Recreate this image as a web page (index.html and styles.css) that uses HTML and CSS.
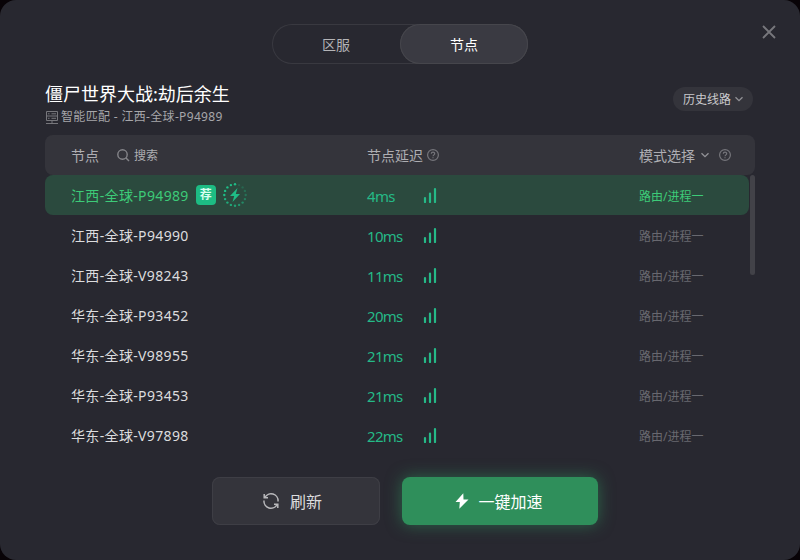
FILE: index.html
```html
<!DOCTYPE html>
<html lang="zh-CN">
<head>
  <meta charset="UTF-8" />
  <meta name="viewport" content="width=device-width, initial-scale=1.0" />
  <title>节点选择</title>
  <link rel="stylesheet" href="styles.css">
</head>
<body>
  <!-- shared icons -->
  <svg class="sprite" width="0" height="0">
    <symbol id="chevron" viewBox="0 0 10 10"><path d="M1.500 3.200 5 6.700 8.500 3.200" /></symbol>
    <symbol id="help" viewBox="0 0 12 12"><circle cx="6" cy="6" r="5.400" /><path d="M4.300 4.800c0-2.300 3.400-2.200 3.400-.1C7.700 5.900 6 5.900 6 7.300M6 8.200v1" /></symbol>
    <symbol id="signal" viewBox="0 0 14 16"><path d="M2 11v4M7 6.500v8.500M12 2v13" /></symbol>
  </svg>

  <div class="window">
    <button class="close" aria-label="关闭">
      <svg width="14" height="14" viewBox="0 0 14 14"><path d="M1 1 13 13M13 1 1 13" /></svg>
    </button>

    <div class="tabs">
      <div class="tab">区服</div>
      <div class="tab active">节点</div>
    </div>

    <div class="heading">
      <div>
        <h1>僵尸世界大战:劫后余生</h1>
        <p class="subtitle">
          <svg class="server" width="12" height="13" viewBox="0 0 12 13"><path d="M.5.5h11v9h-11zM.5 5h11M2 2.800h1.500M5.500 2.800h4.500M2 7.300h1.500M5.500 7.300h4.500M6 9.500v3M0 12.500h12" /></svg>
          <span>智能匹配 - 江西-全球-P94989</span>
        </p>
      </div>
      <button class="history">历史线路<svg class="chevron"><use href="#chevron" /></svg></button>
    </div>

    <div class="table-head">
      <div class="col-name">
        <span>节点</span>
        <svg class="search" width="13" height="13" viewBox="0 0 13 13"><circle cx="5.500" cy="5.500" r="4.700" /><path d="M9 9 12 12" /></svg>
        <span class="search-text">搜索</span>
      </div>
      <div class="col-delay">节点延迟<svg class="help"><use href="#help" /></svg></div>
      <div class="col-mode">模式选择<svg class="chevron"><use href="#chevron" /></svg><svg class="help"><use href="#help" /></svg></div>
    </div>

    <div class="list">
      <div class="rows">
        <div class="row selected">
          <div class="col-name">
            <span>江西-全球-P94989</span>
            <span class="badge">荐</span>
            <svg class="boost" width="24" height="24" viewBox="0 0 24 24">
              <g fill="#1fbd86">
                <circle cx="12" cy="1.300" r="1.200" />
                <circle cx="7.900" cy="2.100" r="1.200" />
                <circle cx="4.400" cy="4.400" r="1.200" />
                <circle cx="2.100" cy="7.900" r="1.200" />
                <circle cx="1.300" cy="12" r="1.200" />
                <circle cx="2.100" cy="16.100" r="1.200" opacity=".9" />
                <circle cx="4.400" cy="19.600" r="1.200" opacity=".85" />
                <circle cx="7.900" cy="21.900" r="1.200" opacity=".8" />
                <circle cx="12" cy="22.700" r="1.200" opacity=".75" />
                <circle cx="16.100" cy="21.900" r="1.200" opacity=".65" />
                <circle cx="19.600" cy="19.600" r="1.200" opacity=".55" />
                <circle cx="21.900" cy="16.100" r="1.200" opacity=".45" />
                <circle cx="22.700" cy="12" r="1.200" opacity=".35" />
                <circle cx="21.900" cy="7.900" r="1.200" opacity=".3" />
                <circle cx="19.600" cy="4.400" r="1.200" opacity=".25" />
                <circle cx="16.100" cy="2.100" r="1.200" opacity=".2" />
                <path d="M14.500 5 7 13h4.200L9.500 19 17 11h-4.200z" />
              </g>
            </svg>
          </div>
          <div class="col-delay"><span class="ms">4ms</span><svg class="signal"><use href="#signal" /></svg></div>
          <div class="col-mode">路由/进程一</div>
        </div>
        <div class="row">
          <div class="col-name">江西-全球-P94990</div>
          <div class="col-delay"><span class="ms">10ms</span><svg class="signal"><use href="#signal" /></svg></div>
          <div class="col-mode">路由/进程一</div>
        </div>
        <div class="row">
          <div class="col-name">江西-全球-V98243</div>
          <div class="col-delay"><span class="ms">11ms</span><svg class="signal"><use href="#signal" /></svg></div>
          <div class="col-mode">路由/进程一</div>
        </div>
        <div class="row">
          <div class="col-name">华东-全球-P93452</div>
          <div class="col-delay"><span class="ms">20ms</span><svg class="signal"><use href="#signal" /></svg></div>
          <div class="col-mode">路由/进程一</div>
        </div>
        <div class="row">
          <div class="col-name">华东-全球-V98955</div>
          <div class="col-delay"><span class="ms">21ms</span><svg class="signal"><use href="#signal" /></svg></div>
          <div class="col-mode">路由/进程一</div>
        </div>
        <div class="row">
          <div class="col-name">华东-全球-P93453</div>
          <div class="col-delay"><span class="ms">21ms</span><svg class="signal"><use href="#signal" /></svg></div>
          <div class="col-mode">路由/进程一</div>
        </div>
        <div class="row">
          <div class="col-name">华东-全球-V97898</div>
          <div class="col-delay"><span class="ms">22ms</span><svg class="signal"><use href="#signal" /></svg></div>
          <div class="col-mode">路由/进程一</div>
        </div>
      </div>
      <div class="scrollbar"></div>
    </div>

    <div class="actions">
      <button class="btn refresh">
        <svg width="16" height="16" viewBox="0 0 16 16"><path d="M1.200 1v3.800H5M1.800 4.600A7 7 0 0 1 15 8.500M14.800 15v-3.800H11M14.200 11.400A7 7 0 0 1 1 7.500" /></svg>
        <span>刷新</span>
      </button>
      <button class="btn start">
        <svg width="14" height="16" viewBox="0 0 14 16"><path d="M8.300.3.500 9h4.300L4.300 15.700 13.500 6.500H8.500z" /></svg>
        <span>一键加速</span>
      </button>
    </div>
  </div>
</body>
</html>
```

FILE: styles.css
```css
:root {
  --window-bg: #282830;
  --panel-bg: #34343b;
  --border: #3e3e45;
  --text: #dcdcde;
  --muted: #a6a6aa;
  --green: #3dcb78;
  --teal: #25b987;
}

* {
  box-sizing: border-box;
}

body {
  margin: 0;
  background: #080307;
  font-family: "Noto Sans", "Noto Sans CJK SC", sans-serif;
  font-size: 14px;
  color: var(--text);
}

button {
  font: inherit;
  padding: 0;
  border: none;
  cursor: pointer;
}

svg {
  flex: none;
  fill: none;
  stroke: currentColor;
}

.sprite {
  position: absolute;
}

.window {
  position: relative;
  width: 800px;
  height: 560px;
  padding: 24px 45px 0;
  border-radius: 16px;
  background: var(--window-bg);
  overflow: hidden;
}

.close {
  position: absolute;
  top: 25px;
  right: 24px;
  width: 14px;
  height: 14px;
  background: none;
  color: #77777c;
}
.close svg {
  display: block;
  stroke-width: 1.8;
}

.tabs {
  display: flex;
  width: 256px;
  height: 40px;
  margin: 0 auto;
  border-radius: 20px;
  box-shadow: inset 0 0 0 1px #393940;
}
.tab {
  flex: 1;
  line-height: 41px;
  text-align: center;
  color: #b4b4b7;
}
.tab.active {
  border-radius: 20px;
  background: #3a3a42;
  box-shadow: inset 0 0 0 1px #46464c;
  color: #fff;
}

.heading {
  display: flex;
  justify-content: space-between;
  height: 71px;
  padding-top: 17px;
}
h1 {
  margin: 0;
  font-size: 18px;
  font-weight: 400;
  line-height: 26px;
  color: #fff;
}
.subtitle {
  display: flex;
  align-items: center;
  gap: 3px;
  margin: 0;
  padding-left: 1px;
  font-size: 12px;
  line-height: 20px;
  letter-spacing: 0.33px;
  color: var(--muted);
}
.server {
  color: #77777c;
}
.history {
  display: flex;
  align-items: center;
  gap: 3px;
  width: 80px;
  height: 24px;
  margin: 6px 2px 0 0;
  padding-left: 10px;
  border-radius: 12px;
  background: var(--panel-bg);
  font-size: 12px;
  color: #cacacd;
}
.chevron {
  width: 10px;
  height: 10px;
  color: #929297;
  stroke-width: 1.3;
}
.help {
  width: 12px;
  height: 12px;
  color: #75757b;
  stroke-width: 1.2;
}

.table-head,
.row {
  display: grid;
  grid-template-columns: 296px 272px 1fr;
  align-items: center;
  height: 40px;
  padding-left: 26px;
}
.table-head {
  border-radius: 8px;
  background: var(--panel-bg);
  color: #aeaeb2;
}
.col-name,
.col-delay,
.col-mode {
  display: flex;
  align-items: center;
  white-space: nowrap;
}
.search {
  margin-left: 18px;
  color: #85858a;
  stroke-width: 1.4;
}
.search-text {
  margin-left: 4px;
  font-size: 12px;
}
.table-head .col-delay .help {
  margin-left: 4px;
}
.table-head .chevron {
  margin-left: 5px;
}
.table-head .col-mode .help {
  margin-left: 9px;
}

.list {
  display: flex;
  width: 710px;
  height: 280px;
}
.rows {
  width: 704px;
}
.row {
  border-radius: 8px;
}
.row .col-name {
  letter-spacing: 0.35px;
}
.row .col-mode {
  padding-top: 1px;
  font-size: 12px;
  color: #68686f;
}
.row.selected {
  background: #2b4a3e;
}
.row.selected .col-name,
.row.selected .col-mode {
  color: var(--green);
}
.badge {
  width: 20px;
  height: 20px;
  margin-left: 7px;
  border-radius: 4px;
  background: #1dbc83;
  font-size: 12px;
  font-weight: 700;
  line-height: 20px;
  letter-spacing: 0;
  text-align: center;
  color: #d9fff0;
}
.boost {
  margin-left: 7px;
  stroke: none;
}
.ms {
  width: 56px;
  padding-top: 1px;
  font-size: 15px;
  letter-spacing: -0.7px;
  color: var(--teal);
}
.signal {
  width: 14px;
  height: 16px;
  color: var(--teal);
  stroke-width: 2.2;
  stroke-linecap: round;
}
.scrollbar {
  width: 5px;
  height: 100px;
  margin-left: 1px;
  border-radius: 3px;
  background: #424248;
}

.actions {
  display: flex;
  justify-content: center;
  gap: 22px;
  padding: 22px 0 0 10px;
}
.btn {
  display: flex;
  align-items: center;
  justify-content: center;
  height: 48px;
  border-radius: 8px;
  font-size: 16px;
}
.refresh {
  gap: 11px;
  width: 168px;
  padding-right: 7px;
  background: var(--panel-bg);
  box-shadow: inset 0 0 0 1px var(--border);
  color: var(--text);
}
.refresh svg {
  color: #b9b9bc;
  stroke-width: 1.5;
}
.start {
  gap: 9px;
  width: 196px;
  padding-right: 2px;
  background: #2f8f5b;
  box-shadow: 0 0 16px rgba(47, 143, 91, 0.6);
  color: #fff;
}
.start svg {
  fill: currentColor;
  stroke: none;
}
```
